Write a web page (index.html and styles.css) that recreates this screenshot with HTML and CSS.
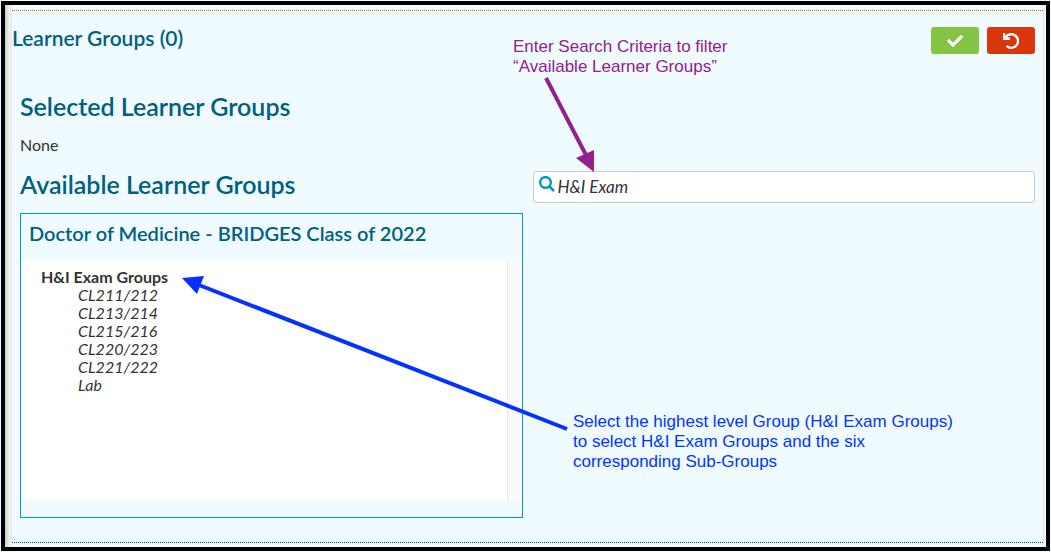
FILE: index.html
```
<!DOCTYPE html>
<html lang="en">
<head>
<meta charset="utf-8">
<meta name="viewport" content="width=device-width, initial-scale=1">
<title>Learner Groups</title>
<link rel="stylesheet" href="styles.css">
</head>
<body>
<main class="frame">
  <section class="manager">
    <header class="manager-header">
      <h1 class="manager-title">Learner Groups (0)</h1>
      <div class="actions">
        <button class="btn btn-save" type="button" aria-label="Save">
          <svg class="btn-icon" viewBox="0 0 512 512" aria-hidden="true"><path d="M173.898 439.404l-166.4-166.4c-9.997-9.997-9.997-26.206 0-36.204l36.203-36.204c9.997-9.998 26.207-9.998 36.204 0L192 312.69 432.095 72.596c9.997-9.997 26.207-9.997 36.204 0l36.203 36.204c9.997 9.997 9.997 26.206 0 36.204l-294.4 294.401c-9.998 9.997-26.207 9.997-36.204-.001z"/></svg>
        </button>
        <button class="btn btn-undo" type="button" aria-label="Undo">
          <svg class="btn-icon" viewBox="0 0 16 16" aria-hidden="true"><path d="M0 0h2.200v2.700A8 8 0 1 1 2.700 13.700l1.600-1.700A5.600 5.600 0 1 0 4 4.400H7V7H0z"/></svg>
        </button>
      </div>
    </header>
    <div class="manager-body">
      <h2 class="heading">Selected Learner Groups</h2>
      <p class="none">None</p>
      <div class="columns">
        <h2 class="heading">Available Learner Groups</h2>
        <label class="search">
          <svg class="search-icon" viewBox="0 0 16 16" aria-hidden="true"><circle cx="6.500" cy="6.500" r="5.300"/><path d="M10.500 10.500L15 15"/></svg>
          <input class="search-input" type="text" value="H&amp;I Exam" aria-label="Search learner groups">
        </label>
        <div class="cohort">
          <h3 class="cohort-title">Doctor of Medicine - BRIDGES Class of 2022</h3>
          <div class="tree">
            <ul class="groups">
              <li><b>H&amp;I Exam Groups</b>
                <ul class="subgroups">
                  <li>CL211/212</li>
                  <li>CL213/214</li>
                  <li>CL215/216</li>
                  <li>CL220/223</li>
                  <li>CL221/222</li>
                  <li>Lab</li>
                </ul>
              </li>
            </ul>
            <div class="track"></div>
          </div>
        </div>
      </div>
    </div>
  </section>
  <p class="note note-search">Enter Search Criteria to filter<br>“Available Learner Groups”</p>
  <p class="note note-select">Select the highest level Group (H&amp;I Exam Groups)<br>to select H&amp;I Exam Groups and the six<br>corresponding Sub-Groups</p>
  <svg class="arrows" width="1051" height="552" aria-hidden="true">
    <g class="arrow-search"><path class="shaft" d="M546 78L587 157"/><path class="head" d="M594 172L576 158L594 150z"/></g>
    <g class="arrow-select"><path class="shaft" d="M567 429L199 285"/><path class="head" d="M182 278L204 276L197 294z"/></g>
  </svg>
</main>
</body>
</html>
```
FILE: styles.css
```
* {
  box-sizing: border-box;
}

body {
  margin: 0;
  padding: 1px;
  background: #effbff;
  color: #333;
  font: 16px/18px Lato, "Open Sans", sans-serif;
}

h1, h2, h3, p, ul {
  margin: 0;
  padding: 0;
}

ul {
  list-style: none;
}

.frame {
  display: flex;
  flex-direction: column;
  min-height: calc(100vh - 2px);
  padding: 5px 3px 4px 7px;
  border: 4px solid #000;
  background: linear-gradient(90deg, #cdcdcd, #f4f4f4 5px, #ebebeb 5px, #ebebeb 7px, #effbff 7px, #effbff calc(100% - 3px), #ebebeb calc(100% - 3px), #ebebeb calc(100% - 1px), #fff calc(100% - 1px));
}

.manager {
  flex: 1;
  border-top: 1px dotted #c60;
  border-bottom: 1px dotted #006080;
  background: #effbff;
}

.manager-header {
  display: flex;
  justify-content: space-between;
  padding: 16px 8px 0 0;
}

.manager-title {
  color: #006080;
  font-size: 21px;
  line-height: 22px;
  font-weight: 600;
}

.actions {
  display: flex;
  gap: 8px;
}

.btn {
  display: flex;
  align-items: center;
  justify-content: center;
  width: 48px;
  height: 27px;
  padding: 0;
  border: 0;
  border-radius: 3px;
}

.btn-save {
  background: #84c444;
}

.btn-undo {
  background: #db360b;
}

.btn-icon {
  width: 16px;
  height: 16px;
  fill: #fff;
}

.manager-body {
  padding: 36px 8px 24px;
}

.heading {
  color: #006080;
  font-size: 25px;
  line-height: 32px;
  font-weight: 600;
}

.none {
  padding: 14px 0 17px;
}

.columns {
  display: grid;
  grid-template-columns: 1fr 1fr;
  gap: 10px;
}

.columns .heading {
  line-height: 26px;
}

.search {
  display: flex;
  height: 32px;
  padding: 4px 5px;
  border: 1px solid #ccc;
  border-radius: 3px;
  background: #fff;
}

.search-icon {
  width: 16px;
  height: 16px;
  fill: none;
  stroke: #09c;
  stroke-width: 2.500;
}

.search-input {
  flex: 1;
  min-width: 0;
  padding: 0 3px;
  border: 0;
  outline: 0;
  background: none;
  color: #333;
  font: italic 17px/22px Lato, "Open Sans", sans-serif;
}

.cohort {
  padding-bottom: 16px;
  border: 1px solid #09c;
}

.cohort-title {
  padding: 7px 8px 16px;
  color: #006080;
  font-size: 20px;
  line-height: 24px;
  font-weight: 600;
}

.tree {
  display: flex;
  min-height: 240px;
  background: #fff;
}

.groups {
  flex: 1;
  padding: 7px 20px;
}

.subgroups {
  padding-left: 37px;
  font-style: italic;
}

.track {
  width: 15px;
  border-left: 1px solid #e8e8e8;
  background: #fafafa;
}

.note {
  position: absolute;
  font: 17px/20px "Liberation Sans", Arial, sans-serif;
}

.note-search {
  left: 513px;
  top: 37px;
  color: #92208f;
}

.note-select {
  left: 573px;
  top: 412px;
  color: #0433ff;
}

.arrows {
  position: absolute;
  left: 0;
  top: 0;
  pointer-events: none;
}

.shaft {
  fill: none;
  stroke-width: 4;
}

.arrow-search {
  fill: #92208f;
  stroke: #92208f;
}

.arrow-select {
  fill: #0433ff;
  stroke: #0433ff;
}

.head {
  stroke: none;
}
```
